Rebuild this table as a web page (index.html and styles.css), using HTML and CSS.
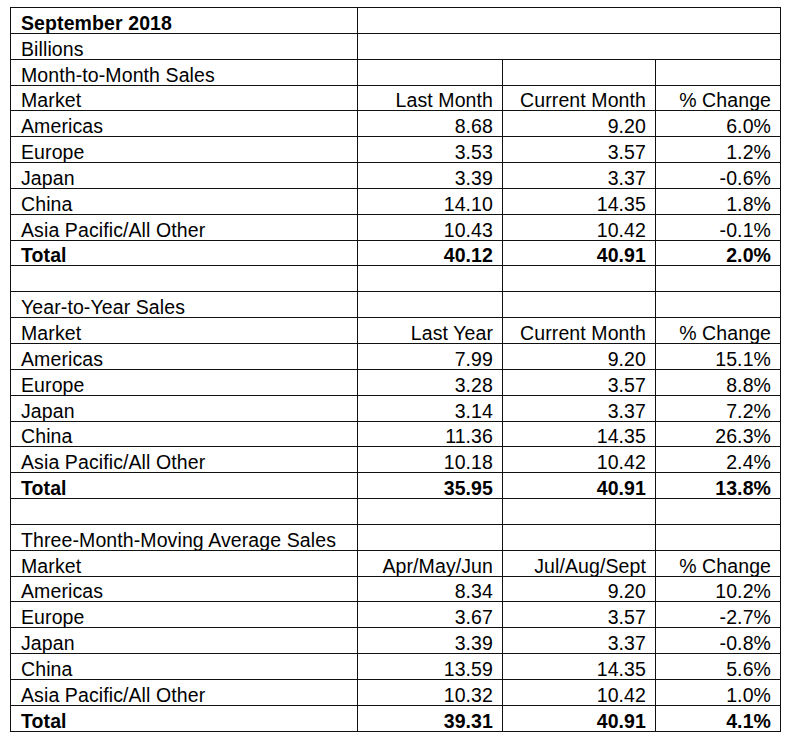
FILE: index.html
```html
<!DOCTYPE html>
<html>
<head>
<meta charset="utf-8">
<link rel="stylesheet" href="styles.css">
</head>
<body>
<table class="sales">
  <colgroup>
    <col class="c-market"><col class="c-a"><col class="c-b"><col class="c-c">
  </colgroup>
  <tbody>
    <tr><td class="bold">September 2018</td><td colspan="3"></td></tr>
    <tr><td>Billions</td><td colspan="3"></td></tr>

    <tr><td>Month-to-Month Sales</td><td></td><td></td><td></td></tr>
    <tr><td>Market</td><td class="num">Last Month</td><td class="num">Current Month</td><td class="num">% Change</td></tr>
    <tr><td>Americas</td><td class="num">8.68</td><td class="num">9.20</td><td class="num">6.0%</td></tr>
    <tr><td>Europe</td><td class="num">3.53</td><td class="num">3.57</td><td class="num">1.2%</td></tr>
    <tr><td>Japan</td><td class="num">3.39</td><td class="num">3.37</td><td class="num">-0.6%</td></tr>
    <tr><td>China</td><td class="num">14.10</td><td class="num">14.35</td><td class="num">1.8%</td></tr>
    <tr><td>Asia Pacific/All Other</td><td class="num">10.43</td><td class="num">10.42</td><td class="num">-0.1%</td></tr>
    <tr class="total"><td>Total</td><td class="num">40.12</td><td class="num">40.91</td><td class="num">2.0%</td></tr>
    <tr><td></td><td></td><td></td><td></td></tr>

    <tr><td>Year-to-Year Sales</td><td></td><td></td><td></td></tr>
    <tr><td>Market</td><td class="num">Last Year</td><td class="num">Current Month</td><td class="num">% Change</td></tr>
    <tr><td>Americas</td><td class="num">7.99</td><td class="num">9.20</td><td class="num">15.1%</td></tr>
    <tr><td>Europe</td><td class="num">3.28</td><td class="num">3.57</td><td class="num">8.8%</td></tr>
    <tr><td>Japan</td><td class="num">3.14</td><td class="num">3.37</td><td class="num">7.2%</td></tr>
    <tr><td>China</td><td class="num">11.36</td><td class="num">14.35</td><td class="num">26.3%</td></tr>
    <tr><td>Asia Pacific/All Other</td><td class="num">10.18</td><td class="num">10.42</td><td class="num">2.4%</td></tr>
    <tr class="total"><td>Total</td><td class="num">35.95</td><td class="num">40.91</td><td class="num">13.8%</td></tr>
    <tr><td></td><td></td><td></td><td></td></tr>

    <tr><td>Three-Month-Moving Average Sales</td><td></td><td></td><td></td></tr>
    <tr><td>Market</td><td class="num">Apr/May/Jun</td><td class="num">Jul/Aug/Sept</td><td class="num">% Change</td></tr>
    <tr><td>Americas</td><td class="num">8.34</td><td class="num">9.20</td><td class="num">10.2%</td></tr>
    <tr><td>Europe</td><td class="num">3.67</td><td class="num">3.57</td><td class="num">-2.7%</td></tr>
    <tr><td>Japan</td><td class="num">3.39</td><td class="num">3.37</td><td class="num">-0.8%</td></tr>
    <tr><td>China</td><td class="num">13.59</td><td class="num">14.35</td><td class="num">5.6%</td></tr>
    <tr><td>Asia Pacific/All Other</td><td class="num">10.32</td><td class="num">10.42</td><td class="num">1.0%</td></tr>
    <tr class="total"><td>Total</td><td class="num">39.31</td><td class="num">40.91</td><td class="num">4.1%</td></tr>
  </tbody>
</table>
</body>
</html>
```
FILE: styles.css
```css
html, body {
  margin: 0;
  padding: 0;
  background: #ffffff;
}

body {
  padding: 7px 0 0 10px;
  font-family: "Liberation Sans", Arial, sans-serif;
  color: #000000;
}

.sales {
  border-collapse: collapse;
  table-layout: fixed;
  width: 770px;
  font-size: 19.5px;
  letter-spacing: 0.1px;
}

.c-market { width: 347px; }
.c-a { width: 145px; }
.c-b { width: 153px; }
.c-c { width: 125px; }

.sales td {
  border: 1px solid #111111;
  height: 25.85px;
  box-sizing: border-box;
  padding: 0 9px 0 10px;
  line-height: 20px;
  vertical-align: bottom;
  white-space: nowrap;
  overflow: hidden;
}

.sales td.num {
  text-align: right;
}

.sales .bold,
.sales .total td {
  font-weight: bold;
}
```
